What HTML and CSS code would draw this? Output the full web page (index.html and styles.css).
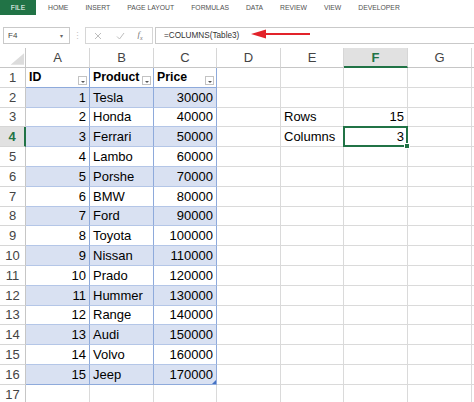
FILE: index.html
```html
<!DOCTYPE html>
<html>
<head>
<meta charset="utf-8">
<link rel="stylesheet" href="styles.css">
</head>
<body>
<div class="ribbon">
  <div class="file">FILE</div>
  <div class="tab first">HOME</div>
  <div class="tab">INSERT</div>
  <div class="tab">PAGE LAYOUT</div>
  <div class="tab">FORMULAS</div>
  <div class="tab">DATA</div>
  <div class="tab">REVIEW</div>
  <div class="tab">VIEW</div>
  <div class="tab">DEVELOPER</div>
</div>
<div class="fbar">
  <div class="namebox"><span>F4</span><span class="dd">&#9662;</span></div>
  <div class="dots">&#8942;</div>
  <div class="fnbox">
    <svg class="ico" width="8" height="8" viewBox="0 0 8 8"><path d="M1 1L7 7M7 1L1 7" stroke="#bdbdbd" stroke-width="1" fill="none"/></svg>
    <svg class="ico" width="9" height="8" viewBox="0 0 9 8"><path d="M1 4.5L3.5 7L8 1" stroke="#bdbdbd" stroke-width="1" fill="none"/></svg>
    <span class="fx">f<sub>x</sub></span>
  </div>
  <div class="finput">=COLUMNS(Table3)</div>
</div>
<svg class="arrow" width="62" height="12" viewBox="0 0 62 12"><path d="M15 5H60V7H15Z" fill="#e2232a"/><path d="M1 6L16 1.5V10.5Z" fill="#e2232a"/></svg>
<div class="sheet">
  <div class="c corner"><svg width="26" height="20" viewBox="0 0 26 20"><path d="M11 17H25V5Z" fill="#dcdcdc"/></svg></div>
  <div class="c ch">A</div><div class="c ch">B</div><div class="c ch">C</div><div class="c ch">D</div><div class="c ch">E</div><div class="c ch csel">F</div><div class="c ch">G</div><div class="c ch x"></div>

  <div class="c rh">1</div>
  <div class="c t th">ID<span class="flt"></span></div><div class="c t th">Product<span class="flt"></span></div><div class="c t th">Price<span class="flt"></span></div>
  <div class="c"></div><div class="c"></div><div class="c"></div><div class="c"></div><div class="c x"></div>

  <div class="c rh">2</div>
  <div class="c t band n">1</div><div class="c t band">Tesla</div><div class="c t band n">30000</div>
  <div class="c"></div><div class="c"></div><div class="c"></div><div class="c"></div><div class="c x"></div>

  <div class="c rh">3</div>
  <div class="c t n">2</div><div class="c t">Honda</div><div class="c t n">40000</div>
  <div class="c"></div><div class="c">Rows</div><div class="c n">15</div><div class="c"></div><div class="c x"></div>

  <div class="c rh rsel">4</div>
  <div class="c t band n">3</div><div class="c t band">Ferrari</div><div class="c t band n">50000</div>
  <div class="c"></div><div class="c">Columns</div><div class="c n active">3</div><div class="c"></div><div class="c x"></div>

  <div class="c rh">5</div>
  <div class="c t n">4</div><div class="c t">Lambo</div><div class="c t n">60000</div>
  <div class="c"></div><div class="c"></div><div class="c"></div><div class="c"></div><div class="c x"></div>

  <div class="c rh">6</div>
  <div class="c t band n">5</div><div class="c t band">Porshe</div><div class="c t band n">70000</div>
  <div class="c"></div><div class="c"></div><div class="c"></div><div class="c"></div><div class="c x"></div>

  <div class="c rh">7</div>
  <div class="c t n">6</div><div class="c t">BMW</div><div class="c t n">80000</div>
  <div class="c"></div><div class="c"></div><div class="c"></div><div class="c"></div><div class="c x"></div>

  <div class="c rh">8</div>
  <div class="c t band n">7</div><div class="c t band">Ford</div><div class="c t band n">90000</div>
  <div class="c"></div><div class="c"></div><div class="c"></div><div class="c"></div><div class="c x"></div>

  <div class="c rh">9</div>
  <div class="c t n">8</div><div class="c t">Toyota</div><div class="c t n">100000</div>
  <div class="c"></div><div class="c"></div><div class="c"></div><div class="c"></div><div class="c x"></div>

  <div class="c rh">10</div>
  <div class="c t band n">9</div><div class="c t band">Nissan</div><div class="c t band n">110000</div>
  <div class="c"></div><div class="c"></div><div class="c"></div><div class="c"></div><div class="c x"></div>

  <div class="c rh">11</div>
  <div class="c t n">10</div><div class="c t">Prado</div><div class="c t n">120000</div>
  <div class="c"></div><div class="c"></div><div class="c"></div><div class="c"></div><div class="c x"></div>

  <div class="c rh">12</div>
  <div class="c t band n">11</div><div class="c t band">Hummer</div><div class="c t band n">130000</div>
  <div class="c"></div><div class="c"></div><div class="c"></div><div class="c"></div><div class="c x"></div>

  <div class="c rh">13</div>
  <div class="c t n">12</div><div class="c t">Range</div><div class="c t n">140000</div>
  <div class="c"></div><div class="c"></div><div class="c"></div><div class="c"></div><div class="c x"></div>

  <div class="c rh">14</div>
  <div class="c t band n">13</div><div class="c t band">Audi</div><div class="c t band n">150000</div>
  <div class="c"></div><div class="c"></div><div class="c"></div><div class="c"></div><div class="c x"></div>

  <div class="c rh">15</div>
  <div class="c t n">14</div><div class="c t">Volvo</div><div class="c t n">160000</div>
  <div class="c"></div><div class="c"></div><div class="c"></div><div class="c"></div><div class="c x"></div>

  <div class="c rh">16</div>
  <div class="c t band last n">15</div><div class="c t band last">Jeep</div><div class="c t band last n resize">170000</div>
  <div class="c"></div><div class="c"></div><div class="c"></div><div class="c"></div><div class="c x"></div>

  <div class="c rh">17</div>
  <div class="c"></div><div class="c"></div><div class="c"></div>
  <div class="c"></div><div class="c"></div><div class="c"></div><div class="c"></div><div class="c x"></div>
</div>
</body>
</html>
```

FILE: styles.css
```css
html, body {
  margin: 0;
  padding: 0;
}
body {
  width: 474px;
  height: 402px;
  overflow: hidden;
  background: #fff;
  font-family: "Liberation Sans", Arial, sans-serif;
  position: relative;
  color: #000;
}

/* Ribbon tabs */
.ribbon {
  display: flex;
  align-items: center;
  height: 15px;
  gap: 17px;
  font-size: 6.8px;
  color: #505050;
}
.file {
  width: 36px;
  height: 15px;
  background: #217346;
  color: #fff;
  display: flex;
  align-items: center;
  justify-content: center;
}
.tab.first {
  margin-left: -5px;
}

/* Formula bar */
.fbar {
  display: flex;
  height: 17px;
  margin-top: 12px;
  font-size: 8px;
  color: #444;
}
.namebox {
  margin-left: 3px;
  width: 67px;
  box-sizing: border-box;
  border: 1px solid #c9c9c9;
  display: flex;
  align-items: center;
  justify-content: space-between;
  padding: 0 6px 0 4px;
}
.dd {
  font-size: 6px;
  color: #666;
}
.dots {
  width: 15px;
  display: flex;
  align-items: center;
  justify-content: center;
  color: #c4c4c4;
  font-size: 9px;
}
.fnbox {
  width: 68px;
  box-sizing: border-box;
  border: 1px solid #d6d6d6;
  display: grid;
  grid-template-columns: 24px 20px 20px;
  justify-items: center;
  align-items: center;
}
.ico {
  display: block;
}
.fx {
  font-family: "Liberation Serif", serif;
  font-style: italic;
  font-size: 9px;
  color: #777;
  line-height: 1;
}
.fx sub {
  font-size: 6px;
}
.finput {
  flex: 1;
  margin-left: 2px;
  box-sizing: border-box;
  border: 1px solid #c9c9c9;
  border-right: none;
  padding-left: 8px;
  display: flex;
  align-items: center;
  color: #333;
  font-size: 8.2px;
}
.arrow {
  position: absolute;
  left: 250px;
  top: 28px;
}

/* Sheet grid */
.sheet {
  margin-top: 4px;
  display: grid;
  grid-template-columns: 26px 64px 64px 63px 64px 63px 64px 64px 1fr;
  grid-template-rows: 20px;
  grid-auto-rows: 19.8px;
}
.c {
  box-sizing: border-box;
  border-right: 1px solid #dadada;
  border-bottom: 1px solid #dadada;
  display: flex;
  align-items: center;
  padding: 0 3px;
  font-size: 13px;
  white-space: nowrap;
  overflow: hidden;
  position: relative;
}
.c.x {
  border-right: none;
}
.n {
  justify-content: flex-end;
}
.corner {
  padding: 0;
  border-right-color: #c6c6c6;
  border-bottom-color: #c6c6c6;
}
.ch {
  justify-content: center;
  color: #444;
  border-bottom-color: #c6c6c6;
  border-right-color: #d6d6d6;
}
.ch.csel {
  background: #e1e1e1;
  color: #217346;
  font-weight: bold;
  border-bottom: 2px solid #217346;
}
.rh {
  justify-content: center;
  padding: 0;
  color: #444;
  border-right-color: #c6c6c6;
  border-bottom-color: #d6d6d6;
}
.rh.rsel {
  background: #e1e1e1;
  color: #217346;
  font-weight: bold;
  border-right: 2px solid #217346;
}

/* Table styling */
.t {
  border-right-color: #8eaadb;
  border-bottom-color: #b4c6e7;
}
.band {
  background: #d9e1f2;
}
.th {
  font-weight: bold;
  font-size: 12.3px;
  justify-content: space-between;
  border-bottom-color: #8eaadb;
  padding-right: 2px;
}
.last {
  border-bottom-color: #8eaadb;
}
.flt {
  align-self: flex-end;
  margin-bottom: 2px;
  width: 9px;
  height: 9px;
  flex: none;
  box-sizing: border-box;
  border: 1px solid #c3c3c3;
  background: #fff;
  display: flex;
  align-items: flex-end;
  justify-content: center;
  padding-bottom: 1px;
}
.flt::after {
  content: "";
  border-top: 2px solid #555;
  border-left: 2px solid transparent;
  border-right: 2px solid transparent;
}
.resize::after {
  content: "";
  position: absolute;
  right: 0;
  bottom: 0;
  border-bottom: 4px solid #4472c4;
  border-left: 4px solid transparent;
}

/* Active cell */
.active {
  overflow: visible;
}
.active::before {
  content: "";
  position: absolute;
  left: -1px;
  top: -1px;
  right: -1px;
  bottom: -1px;
  border: 2px solid #217346;
}
.active::after {
  content: "";
  position: absolute;
  right: -3px;
  bottom: -3px;
  width: 4px;
  height: 4px;
  background: #217346;
  border: 1px solid #fff;
  z-index: 2;
}
```
